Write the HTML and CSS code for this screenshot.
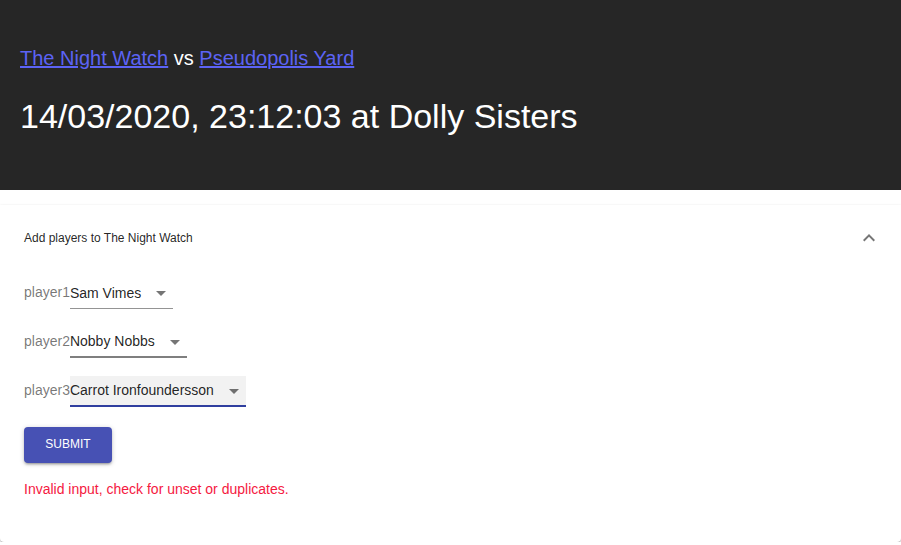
FILE: index.html
```html
<!DOCTYPE html>
<html>
<head>
<meta charset="utf-8">
<link rel="stylesheet" href="styles.css">
</head>
<body>
<header class="hero">
  <div class="teams"><a href="#">The Night Watch</a> vs <a href="#">Pseudopolis Yard</a></div>
  <div class="when">14/03/2020, 23:12:03 at Dolly Sisters</div>
</header>
<section class="panel">
  <div class="summary">
    <span class="summary-title">Add players to The Night Watch</span>
    <svg class="chev" viewBox="0 0 24 24" width="24" height="24"><path d="M12 8l-6 6 1.41 1.41L12 10.83l4.59 4.58L18 14z" fill="rgba(0,0,0,0.54)"/></svg>
  </div>
  <div class="details">
    <div class="row">
      <span class="label">player1</span>
      <div class="select"><span class="value">Sam Vimes</span><svg class="arrow" viewBox="0 0 24 24" width="24" height="24"><path d="M7 10l5 5 5-5z"/></svg></div>
    </div>
    <div class="row">
      <span class="label">player2</span>
      <div class="select hover"><span class="value">Nobby Nobbs</span><svg class="arrow" viewBox="0 0 24 24" width="24" height="24"><path d="M7 10l5 5 5-5z"/></svg></div>
    </div>
    <div class="row">
      <span class="label">player3</span>
      <div class="select focused"><span class="value">Carrot Ironfoundersson</span><svg class="arrow" viewBox="0 0 24 24" width="24" height="24"><path d="M7 10l5 5 5-5z"/></svg></div>
    </div>
    <button class="submit">Submit</button>
    <p class="error">Invalid input, check for unset or duplicates.</p>
  </div>
</section>
</body>
</html>
```

FILE: styles.css
```css
html, body { margin: 0; padding: 0; background: #fff; }
body { font-family: "Liberation Sans", Arial, sans-serif; }

.hero {
  background: #262626;
  color: #fff;
  height: 190px;
  box-sizing: border-box;
  padding: 45px 20px 0;
}
.teams { font-size: 20px; line-height: 26px; }
.teams a { color: #5c63f5; text-decoration: underline; }
.when { font-size: 34px; line-height: 40px; margin-top: 25px; }

.panel {
  margin-top: 15px;
  background: #fff;
  border-radius: 0 0 4px 4px;
  box-shadow: 0 1px 3px 0 rgba(0,0,0,0.2), 0 1px 1px 0 rgba(0,0,0,0.14), 0 2px 1px -1px rgba(0,0,0,0.12);
}
.summary {
  display: flex;
  align-items: center;
  justify-content: space-between;
  height: 64px;
  box-sizing: border-box;
  padding: 2px 20px 0 24px;
}
.summary-title { font-size: 12px; color: rgba(0,0,0,0.87); }
.chev { display: block; }

.details { padding: 8px 24px 23px; }
.row {
  display: flex;
  align-items: flex-end;
  height: 32px;
  margin-bottom: 17px;
}
.label { font-size: 14px; color: rgba(0,0,0,0.54); line-height: 19px; padding-bottom: 7px; }
.select {
  display: flex;
  align-items: center;
  height: 30px;
  border-bottom: 1px solid rgba(0,0,0,0.42);
  position: relative;
  font-size: 14px;
  color: rgba(0,0,0,0.87);
}
.select .value { padding-right: 32px; line-height: 19px; }
.select .arrow { position: absolute; right: 0; top: 3px; fill: rgba(0,0,0,0.54); }
.select.hover { height: 29px; border-bottom: 2px solid rgba(0,0,0,0.5); }
.select.focused { height: 29px; border-bottom: 2px solid #303f9f; background: rgba(0,0,0,0.05); }

.submit {
  display: block;
  margin-top: 20px;
  height: 36px;
  min-width: 88px;
  padding: 0 16px 2px;
  border: none;
  border-radius: 4px;
  background: #4751b4;
  color: #fff;
  font-family: "Liberation Sans", Arial, sans-serif;
  font-size: 12px;
  font-weight: 400;
  text-transform: uppercase;
  box-shadow: 0 1px 5px 0 rgba(0,0,0,0.2), 0 2px 2px 0 rgba(0,0,0,0.14), 0 3px 1px -2px rgba(0,0,0,0.12);
}
.error {
  margin: 16px 0 0;
  font-size: 14px;
  line-height: 20px;
  color: #f5193f;
  padding-bottom: 20px;
}
```
